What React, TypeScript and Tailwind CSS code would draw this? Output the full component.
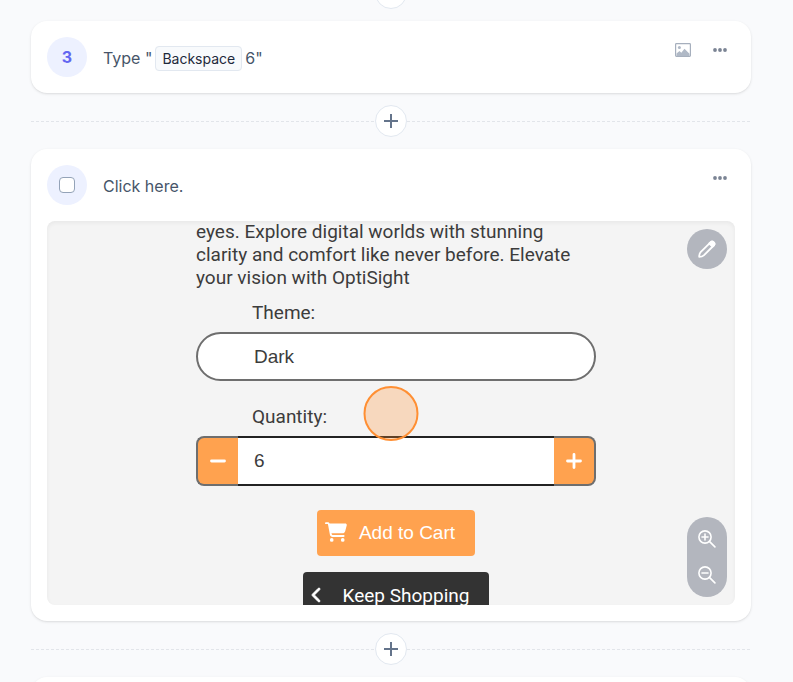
import { useState } from "react";
import type { ReactNode } from "react";
import { FaCartShopping, FaChevronLeft } from "react-icons/fa6";

function Divider() {
  return (
    <div className="flex h-14 items-center">
      <span className="h-px flex-1 bg-[repeating-linear-gradient(90deg,#e2e5ea_0_3px,transparent_3px_5px)]" />
      <button
        type="button"
        aria-label="Add step"
        className="flex size-8 items-center justify-center rounded-full border border-[#e2e8f0] bg-white text-[#64748b]"
      >
        <svg viewBox="0 0 14 14" className="size-3.5" fill="currentColor" aria-hidden="true">
          <path d="M6 0h2v6h6v2H8v6H6V8H0V6h6z" />
        </svg>
      </button>
      <span className="h-px flex-1 bg-[repeating-linear-gradient(90deg,#e2e5ea_0_3px,transparent_3px_5px)]" />
    </div>
  );
}

function Card({ children }: { children?: ReactNode }) {
  return <section className="rounded-2xl bg-white p-4 shadow-sm">{children}</section>;
}

function MoreButton() {
  return (
    <button type="button" aria-label="More options" className="flex h-[26px] w-[30px] items-center justify-center text-[#7b8494]">
      <svg viewBox="0 0 14 4" className="h-1 w-3.5" fill="currentColor" aria-hidden="true">
        <circle cx="2" cy="2" r="1.9" />
        <circle cx="7" cy="2" r="1.9" />
        <circle cx="12" cy="2" r="1.9" />
      </svg>
    </button>
  );
}

function ImageIcon() {
  return (
    <svg viewBox="0 0 16 14" className="h-3.5 w-4" aria-hidden="true">
      <rect x="0.6" y="0.6" width="14.8" height="12.8" rx="0.8" fill="none" stroke="#a6afbd" strokeWidth="1.2" />
      <circle cx="4.4" cy="4.4" r="1.5" fill="#b0b9c6" />
      <path d="M1.500 13v-2.500L4.500 8l1.800 1.800L9.500 5.800l5 5V13z" fill="#b0b9c6" />
    </svg>
  );
}

function PencilIcon() {
  return (
    <svg viewBox="0 0 18 18" className="size-[18px]" fill="none" stroke="white" strokeWidth="1.8" strokeLinejoin="round" aria-hidden="true">
      <path d="M1.200 16.800c0-2 .5-3.600 1.400-4.600L12.500 2.300a2.200 2.200 0 0 1 3.200 3.200L5.800 15.400c-1 .9-2.600 1.400-4.600 1.400z" />
      <path d="m11.300 3.500 3.200 3.200 1.200-1.200a2.200 2.200 0 0 0-3.200-3.200z" fill="white" />
    </svg>
  );
}

function ZoomIcon({ plus }: { plus?: boolean }) {
  return (
    <svg viewBox="0 0 18 18" className="size-[18px]" fill="none" stroke="white" strokeWidth="1.6" strokeLinecap="round" aria-hidden="true">
      <circle cx="7" cy="7" r="6.1" />
      <path d="m11.400 11.400 5.500 5.500" />
      <path d={plus ? "M4 7h6M7 4v6" : "M4 7h6"} />
    </svg>
  );
}

function StepIcon({ plus }: { plus?: boolean }) {
  return (
    <svg viewBox="0 0 16 16" className="size-4" fill="none" stroke="white" strokeWidth="2.8" strokeLinecap="round" aria-hidden="true">
      <path d={plus ? "M1.500 8h13M8 1.500v13" : "M1.500 8h13"} />
    </svg>
  );
}

function ProductShot() {
  const [quantity, setQuantity] = useState("6");
  const step = (by: number) => setQuantity(String(Math.max(0, Number(quantity) + by)));
  return (
    <div className="relative mt-4 h-96 overflow-hidden rounded-lg bg-[#f4f4f4] pl-2.5 font-[Roboto,sans-serif] text-[19px] leading-[23px] text-[#3c3c3c] shadow-[inset_0_2px_4px_rgba(0,0,0,0.05)]">
      <div className="mx-auto -mt-px flex max-w-[400px] flex-col">
        <p>eyes. Explore digital worlds with stunning clarity and comfort like never before. Elevate your vision with OptiSight</p>
        <label htmlFor="theme" className="mt-3 ml-14">Theme:</label>
        <select
          id="theme"
          defaultValue="Dark"
          className="mt-2 h-[49px] appearance-none rounded-full border-2 border-[#6e6e6e] bg-white px-14 font-['Liberation_Sans',Arial,sans-serif]"
        >
          <option>Dark</option>
          <option>Light</option>
        </select>
        <label htmlFor="quantity" className="mt-6 ml-14">Quantity:</label>
        <div className="mt-2 flex h-[50px]">
          <button
            type="button"
            aria-label="Decrease quantity"
            onClick={() => step(-1)}
            className="flex w-[42px] items-center justify-center rounded-l-lg border-2 border-r-0 border-[#6e6e6e] bg-[#ffa24f]"
          >
            <StepIcon />
          </button>
          <input
            id="quantity"
            value={quantity}
            onChange={(e) => setQuantity(e.target.value)}
            className="min-w-0 flex-1 border-y-2 border-[#222] bg-white px-4 pb-0.5 font-['Liberation_Sans',Arial,sans-serif]"
          />
          <button
            type="button"
            aria-label="Increase quantity"
            onClick={() => step(1)}
            className="flex w-[42px] items-center justify-center rounded-r-lg border-2 border-l-0 border-[#6e6e6e] bg-[#ffa24f]"
          >
            <StepIcon plus />
          </button>
        </div>
        <button
          type="button"
          className="mt-6 flex h-[46px] items-center gap-3 self-center rounded bg-[#ffa24f] pr-5 pb-0.5 pl-2 font-['Liberation_Sans',Arial,sans-serif] text-white"
        >
          <FaCartShopping className="size-[22px]" />
          Add to Cart
        </button>
        <button type="button" className="mt-4 flex h-[46px] items-center gap-[18px] self-center rounded bg-[#333] pr-5 pl-1.5 text-white">
          <FaChevronLeft className="size-4" strokeWidth="30" stroke="white" />
          Keep Shopping
        </button>
      </div>
      <span className="absolute top-[165px] left-1/2 size-[55px] -translate-x-1/2 rounded-full border-2 border-[#ff8f33] bg-[#ff8f33]/28" />
      <button type="button" aria-label="Edit image" className="absolute top-2 right-2 flex size-10 items-center justify-center rounded-full bg-[#b3b6be]">
        <PencilIcon />
      </button>
      <div className="absolute right-2 bottom-2 flex w-10 flex-col rounded-full bg-[#b3b6be] py-1">
        <button type="button" aria-label="Zoom in" className="flex h-9 items-center justify-center">
          <ZoomIcon plus />
        </button>
        <button type="button" aria-label="Zoom out" className="flex h-9 items-center justify-center">
          <ZoomIcon />
        </button>
      </div>
    </div>
  );
}

export default function App() {
  return (
    <div className="flow-root h-screen overflow-hidden bg-[#f9fafc] font-[Inter,sans-serif] text-base text-[#475569]">
      <main className="-mt-[35px] mr-[42px] ml-[31px]">
        <Divider />
        <Card>
          <div className="flex items-start">
            <span className="flex size-10 items-center justify-center rounded-full bg-[#edf1ff] font-bold text-[#6366f1]">3</span>
            <p className="mt-[9px] ml-4 flex-1">
              Type "
              <kbd className="mx-[3px] rounded border border-[#e2e8f0] bg-[#f8fafc] px-1.5 py-[3px] font-[Inter,sans-serif] text-sm text-[#1e293b]">Backspace</kbd>6"
            </p>
            <button type="button" aria-label="Add image" className="mr-1.5 flex h-[26px] w-8 items-center justify-center">
              <ImageIcon />
            </button>
            <MoreButton />
          </div>
        </Card>
        <Divider />
        <Card>
          <div className="flex items-start">
            <span className="flex size-10 items-center justify-center rounded-full bg-[#edf1ff]">
              <input
                type="checkbox"
                aria-label="Select step"
                className="size-4 appearance-none rounded-sm border border-[#94a3b8] bg-white checked:bg-[#6366f1]"
              />
            </span>
            <p className="mt-[9px] ml-4 flex-1">Click here.</p>
            <MoreButton />
          </div>
          <ProductShot />
        </Card>
        <Divider />
        <Card />
      </main>
    </div>
  );
}
